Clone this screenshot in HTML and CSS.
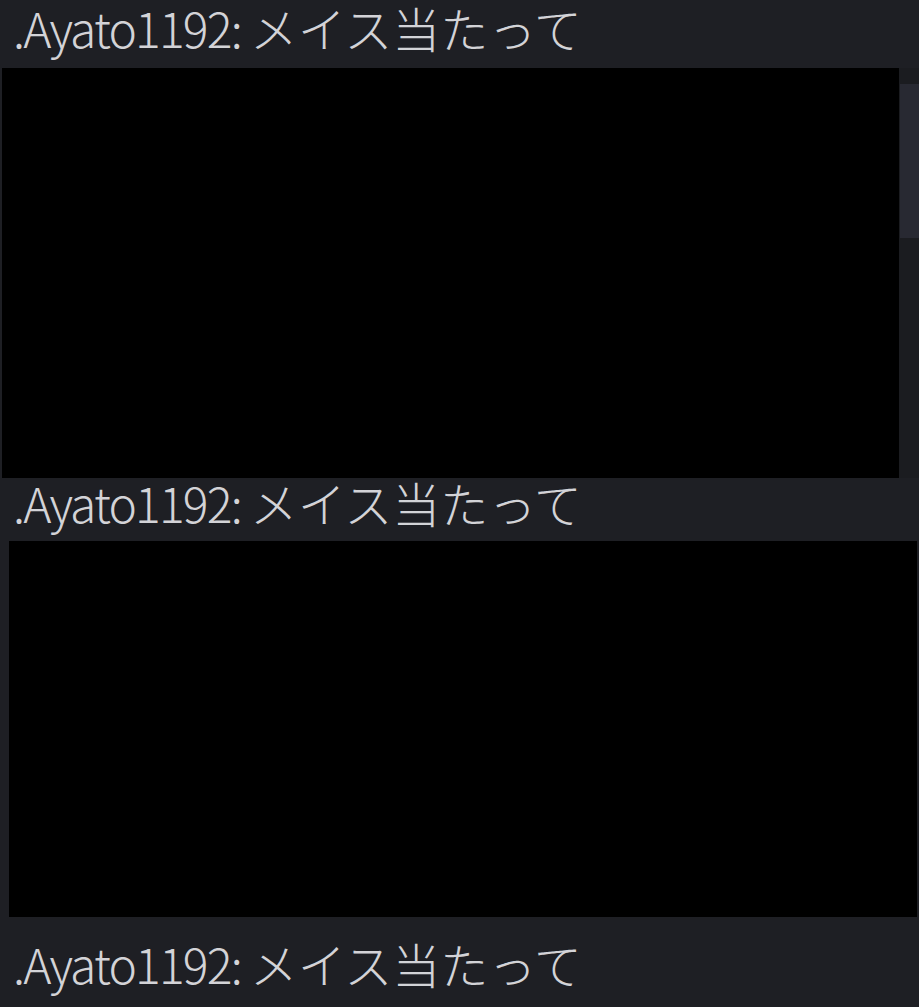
FILE: index.html
```html
<!DOCTYPE html>
<html lang="ja">
<head>
<meta charset="utf-8">
<title>chat</title>
<link rel="stylesheet" href="styles.css">
</head>
<body>
<div class="feed">
  <div class="line line-first"><span class="name">.Ayato1192: </span>メイス当たって</div>
  <div class="media media-first">
    <div class="video video-first"></div>
    <div class="scroll"><div class="thumb"></div></div>
  </div>
  <div class="line line-second"><span class="name">.Ayato1192: </span>メイス当たって</div>
  <div class="media media-second">
    <div class="video video-second"></div>
  </div>
  <div class="line line-third"><span class="name">.Ayato1192: </span>メイス当たって</div>
</div>
</body>
</html>
```
FILE: styles.css
```css
html, body {
  margin: 0;
  padding: 0;
  background: #1e1f24;
  height: 100%;
  overflow: hidden;
}
.feed {
  display: flex;
  flex-direction: column;
}
.line {
  font-family: "Noto Sans CJK JP", "Noto Sans", sans-serif;
  font-weight: 300;
  font-size: 48px;
  line-height: 48px;
  color: #d3d3d7;
  padding-left: 13px;
  white-space: nowrap;
  box-sizing: border-box;
}
.name {
  letter-spacing: -1.8px;
}
.line-first {
  height: 68px;
  padding-top: 3px;
}
.line-second {
  height: 63px;
  padding-top: 0;
}
.line-third {
  height: 90px;
  padding-top: 22px;
}
.media {
  display: flex;
}
.media-first {
  padding-left: 2px;
  height: 410px;
}
.video {
  background: #000;
}
.video-first {
  width: 897px;
  height: 410px;
}
.scroll {
  flex: 1;
  background: #1b1c20;
  padding-top: 16px;
  padding-left: 1px;
}
.thumb {
  height: 154px;
  background: #282932;
}
.media-second {
  padding-left: 9px;
  height: 376px;
}
.video-second {
  width: 908px;
  height: 376px;
}
```
